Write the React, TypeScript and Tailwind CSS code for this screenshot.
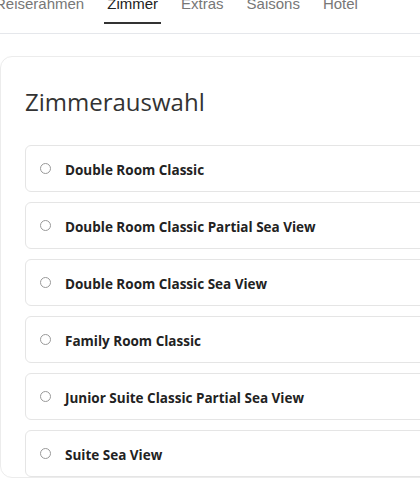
import React from "react";

const tabs = ["Reiserahmen", "Zimmer", "Extras", "Saisons", "Hotel"];
const rooms = [
  "Double Room Classic",
  "Double Room Classic Partial Sea View",
  "Double Room Classic Sea View",
  "Family Room Classic",
  "Junior Suite Classic Partial Sea View",
  "Suite Sea View",
];

export default function App() {
  return (
    <div className="w-[420px] h-[500px] overflow-hidden bg-white">
      <div className="mt-[-6px] border-b border-[#e5e7eb] pb-[9px]">
        <ul
          className="flex gap-[17px] ml-[-8px] text-[15px] leading-[20px]"
          style={{ fontFamily: '"Liberation Sans", Arial, sans-serif' }}
        >
          {tabs.map((t) => (
            <li
              key={t}
              className={
                t === "Zimmer"
                  ? "px-[3px] pb-[8px] border-b-2 border-[#333] text-[#222]"
                  : "px-[3px] pb-[8px] border-b-2 border-transparent text-[#777]"
              }
            >
              {t}
            </li>
          ))}
        </ul>
      </div>
      <div
        className="mt-[22px] w-[470px] rounded-xl border border-[#ececec] pl-[24px] pt-[28px]"
        style={{ fontFamily: '"Open Sans", "Noto Sans", sans-serif' }}
      >
        <h2 className="text-[24px] leading-[34px] text-[#333] mb-[26px]">Zimmerauswahl</h2>
        <div className="flex flex-col gap-[10px]">
          {rooms.map((r) => (
            <div
              key={r}
              className="h-[47px] rounded-md border border-[#e5e5e5] flex items-center pl-[14px]"
            >
              <span className="w-[11px] h-[11px] rounded-full border border-[#999] shrink-0" />
              <span className="ml-[14px] pt-[3px] text-[13.5px] font-bold text-[#222]">{r}</span>
            </div>
          ))}
        </div>
      </div>
    </div>
  );
}
